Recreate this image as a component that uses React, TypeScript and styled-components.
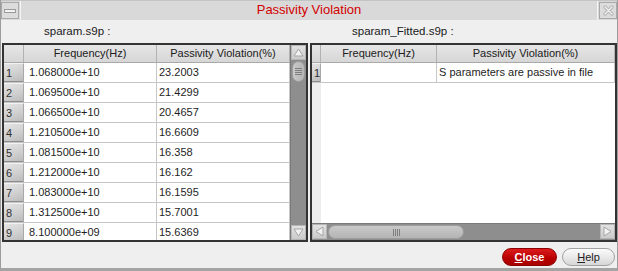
import React from "react";
import styled, { createGlobalStyle } from "styled-components";

const rows = [
  ["1.068000e+10", "23.2003"],
  ["1.069500e+10", "21.4299"],
  ["1.066500e+10", "20.4657"],
  ["1.210500e+10", "16.6609"],
  ["1.081500e+10", "16.358"],
  ["1.212000e+10", "16.162"],
  ["1.083000e+10", "16.1595"],
  ["1.312500e+10", "15.7001"],
  ["8.100000e+09", "15.6369"],
];

const LEFT_COLS = "20px 133px 1fr";
const RIGHT_COLS = "9px 116px 1fr";

const GlobalStyle = createGlobalStyle`
  html, body {
    margin: 0;
    padding: 0;
    background: #efefef;
  }
  body {
    font-family: "Liberation Sans", Arial, sans-serif;
    font-size: 11px;
    color: #1e1e1e;
  }
`;

const Window = styled.div`
  width: 618px;
  height: 271px;
  box-sizing: border-box;
  display: flex;
  flex-direction: column;
  background: #efefef;
  border-left: 1px solid #9c9c9c;
  border-right: 1px solid #9c9c9c;
  border-bottom: 3px solid #a4a4a4;
  overflow: hidden;
`;

const TitleBar = styled.div`
  height: 20px;
  flex: none;
  display: flex;
  align-items: stretch;
  background: #d9d9d9;
  border-top: 1px solid #c4c4c4;
  box-sizing: border-box;
`;

const TitleButton = styled.div`
  width: 18px;
  flex: none;
  box-sizing: border-box;
  margin: 1px 0;
  border: 1px solid #a9a9a9;
  background: #dcdcdc;
  display: flex;
  align-items: center;
  justify-content: center;
`;

const TitleSep = styled.div`
  width: 1px;
  background: #f4f4f4;
  margin: 0 1px;
`;

const Minimize = styled.div`
  width: 10px;
  height: 2px;
  border: 1px solid #9a9a9a;
  background: #f2f2f2;
`;

const Title = styled.div`
  flex: 1;
  text-align: center;
  font-size: 13px;
  line-height: 18px;
  color: #d40000;
`;

const Panes = styled.div`
  display: flex;
  gap: 2px;
  padding-left: 1px;
`;

const Pane = styled.div<{ $width?: number }>`
  display: flex;
  flex-direction: column;
  ${(p) => (p.$width ? `width: ${p.$width}px; flex: none;` : "flex: 1;")}
`;

const FileLabel = styled.div`
  height: 23px;
  line-height: 22px;
  padding-left: 42px;
  font-size: 11.5px;
  color: #202020;
`;

const Frame = styled.div<{ $vertical?: boolean }>`
  height: 199px;
  box-sizing: border-box;
  border: 2px solid #333;
  display: flex;
  flex-direction: ${(p) => (p.$vertical ? "column" : "row")};
  background: #fff;
  overflow: hidden;
`;

const TableArea = styled.div<{ $gutter?: number }>`
  flex: 1;
  min-width: 0;
  min-height: 0;
  overflow: hidden;
  background: ${(p) =>
    p.$gutter
      ? `linear-gradient(to right, #ededed 0 ${p.$gutter}px, #fff ${p.$gutter}px)`
      : "#fff"};
`;

const Row = styled.div<{ $cols: string; $header?: boolean }>`
  display: grid;
  grid-template-columns: ${(p) => p.$cols};
  height: ${(p) => (p.$header ? 18 : 20)}px;
  box-sizing: border-box;
  border-bottom: 1px solid ${(p) => (p.$header ? "#a9a9a9" : "#c6c6c6")};
  background: ${(p) =>
    p.$header ? "linear-gradient(#e6e6e6, #d6d6d6)" : "#fff"};
`;

const HeadCell = styled.div`
  border-right: 1px solid #b2b2b2;
  text-align: center;
  line-height: 17px;
  color: #202020;
  white-space: nowrap;
  overflow: hidden;
`;

const RowHead = styled.div`
  background: linear-gradient(160deg, #e4e4e4 0%, #cfcfcf 55%, #b9b9b9 100%);
  border-right: 1px solid #a8a8a8;
  border-top: 1px solid #f2f2f2;
  box-shadow: inset 0 -1px 0 #8e8e8e;
  line-height: 19px;
  padding-left: 2px;
  color: #303030;
  overflow: hidden;
`;

const Cell = styled.div<{ $pad: number }>`
  border-right: 1px solid #c6c6c6;
  line-height: 19px;
  padding-left: ${(p) => p.$pad}px;
  white-space: nowrap;
  overflow: hidden;
`;

const VScroll = styled.div`
  width: 15px;
  flex: none;
  display: flex;
  flex-direction: column;
  background: #8e8e8e;
  border-left: 1px solid #7a7a7a;
`;

const HScroll = styled.div`
  height: 16px;
  flex: none;
  display: flex;
  background: #8e8e8e;
  border-top: 1px solid #7a7a7a;
`;

const Arrow = styled.div`
  width: 15px;
  height: 15px;
  flex: none;
  box-sizing: border-box;
  background: linear-gradient(#e2e2e2, #cbcbcb);
  border: 1px solid #b5b5b5;
  display: flex;
  align-items: center;
  justify-content: center;
`;

const Track = styled.div<{ $vertical?: boolean }>`
  flex: 1;
  display: flex;
  flex-direction: ${(p) => (p.$vertical ? "column" : "row")};
  padding: 1px;
`;

const Thumb = styled.div<{ $length: number; $vertical?: boolean }>`
  ${(p) =>
    p.$vertical
      ? `height: ${p.$length}px; width: 100%;`
      : `width: ${p.$length}px; height: 100%;`}
  box-sizing: border-box;
  border: 1px solid #9d9d9d;
  border-radius: 7px;
  background: linear-gradient(${(p) => (p.$vertical ? "to right" : "to bottom")}, #c9c9c9, #b4b4b4);
  display: flex;
  align-items: center;
  justify-content: center;
`;

const Grip = styled.div<{ $vertical?: boolean }>`
  width: 7px;
  height: 7px;
  background: repeating-linear-gradient(
    ${(p) => (p.$vertical ? "to bottom" : "to right")},
    #7e7e7e 0 1px,
    transparent 1px 2px
  );
`;

const ButtonBar = styled.div`
  flex: 1;
  display: flex;
  justify-content: flex-end;
  align-items: flex-start;
  gap: 5px;
  padding: 6px 2px 0 0;
`;

const Button = styled.div<{ $primary?: boolean }>`
  width: ${(p) => (p.$primary ? 55 : 53)}px;
  height: 18px;
  box-sizing: border-box;
  border-radius: 9px;
  text-align: center;
  line-height: 16px;
  font-size: 11px;
  font-weight: ${(p) => (p.$primary ? "bold" : "normal")};
  color: ${(p) => (p.$primary ? "#fff" : "#222")};
  border: 1px solid ${(p) => (p.$primary ? "#8c0000" : "#a2a2a2")};
  background: ${(p) =>
    p.$primary
      ? "linear-gradient(#dc1c1c, #b80000 60%, #a80000)"
      : "linear-gradient(#fbfbfb, #e6e6e6 60%, #d6d6d6)"};
`;

const TriUp = () => (
  <svg width="11" height="9" viewBox="0 0 11 9">
    <path d="M5.5 1 L10 8 L1 8 Z" fill="#f3f3f3" stroke="#a5a5a5" strokeWidth="1" />
  </svg>
);

const TriDown = () => (
  <svg width="11" height="9" viewBox="0 0 11 9">
    <path d="M1 1 L10 1 L5.5 8 Z" fill="#f3f3f3" stroke="#a5a5a5" strokeWidth="1" />
  </svg>
);

const TriLeft = () => (
  <svg width="9" height="11" viewBox="0 0 9 11">
    <path d="M1 5.5 L8 1 L8 10 Z" fill="#f3f3f3" stroke="#a5a5a5" strokeWidth="1" />
  </svg>
);

const TriRight = () => (
  <svg width="9" height="11" viewBox="0 0 9 11">
    <path d="M1 1 L8 5.5 L1 10 Z" fill="#f3f3f3" stroke="#a5a5a5" strokeWidth="1" />
  </svg>
);

const CloseX = () => (
  <svg width="11" height="11" viewBox="0 0 11 11">
    <path d="M2 2 L9 9 M9 2 L2 9" stroke="#b4b4b4" strokeWidth="3.2" strokeLinecap="round" />
    <path d="M2 2 L9 9 M9 2 L2 9" stroke="#f0f0f0" strokeWidth="1.4" strokeLinecap="round" />
  </svg>
);

export default function App() {
  return (
    <>
      <GlobalStyle />
      <Window>
        <TitleBar>
          <TitleButton>
            <Minimize />
          </TitleButton>
          <TitleSep />
          <Title>Passivity Violation</Title>
          <TitleSep />
          <TitleButton>
            <CloseX />
          </TitleButton>
        </TitleBar>

        <Panes>
          <Pane $width={306}>
            <FileLabel>sparam.s9p :</FileLabel>
            <Frame>
              <TableArea>
                <Row $cols={LEFT_COLS} $header>
                  <HeadCell />
                  <HeadCell>Frequency(Hz)</HeadCell>
                  <HeadCell>Passivity Violation(%)</HeadCell>
                </Row>
                {rows.map(([freq, pv], i) => (
                  <Row key={i} $cols={LEFT_COLS}>
                    <RowHead>{i + 1}</RowHead>
                    <Cell $pad={5}>{freq}</Cell>
                    <Cell $pad={2}>{pv}</Cell>
                  </Row>
                ))}
              </TableArea>
              <VScroll>
                <Arrow>
                  <TriUp />
                </Arrow>
                <Track $vertical>
                  <Thumb $vertical $length={21}>
                    <Grip $vertical />
                  </Thumb>
                </Track>
                <Arrow>
                  <TriDown />
                </Arrow>
              </VScroll>
            </Frame>
          </Pane>

          <Pane>
            <FileLabel>sparam_Fitted.s9p :</FileLabel>
            <Frame $vertical>
              <TableArea $gutter={9}>
                <Row $cols={RIGHT_COLS} $header>
                  <HeadCell />
                  <HeadCell>Frequency(Hz)</HeadCell>
                  <HeadCell>Passivity Violation(%)</HeadCell>
                </Row>
                <Row $cols={RIGHT_COLS}>
                  <RowHead>1</RowHead>
                  <Cell $pad={5} />
                  <Cell $pad={2}>S parameters are passive in file</Cell>
                </Row>
              </TableArea>
              <HScroll>
                <Arrow>
                  <TriLeft />
                </Arrow>
                <Track>
                  <Thumb $length={136}>
                    <Grip />
                  </Thumb>
                </Track>
                <Arrow>
                  <TriRight />
                </Arrow>
              </HScroll>
            </Frame>
          </Pane>
        </Panes>

        <ButtonBar>
          <Button $primary>
            <u>C</u>lose
          </Button>
          <Button>
            <u>H</u>elp
          </Button>
        </ButtonBar>
      </Window>
    </>
  );
}
